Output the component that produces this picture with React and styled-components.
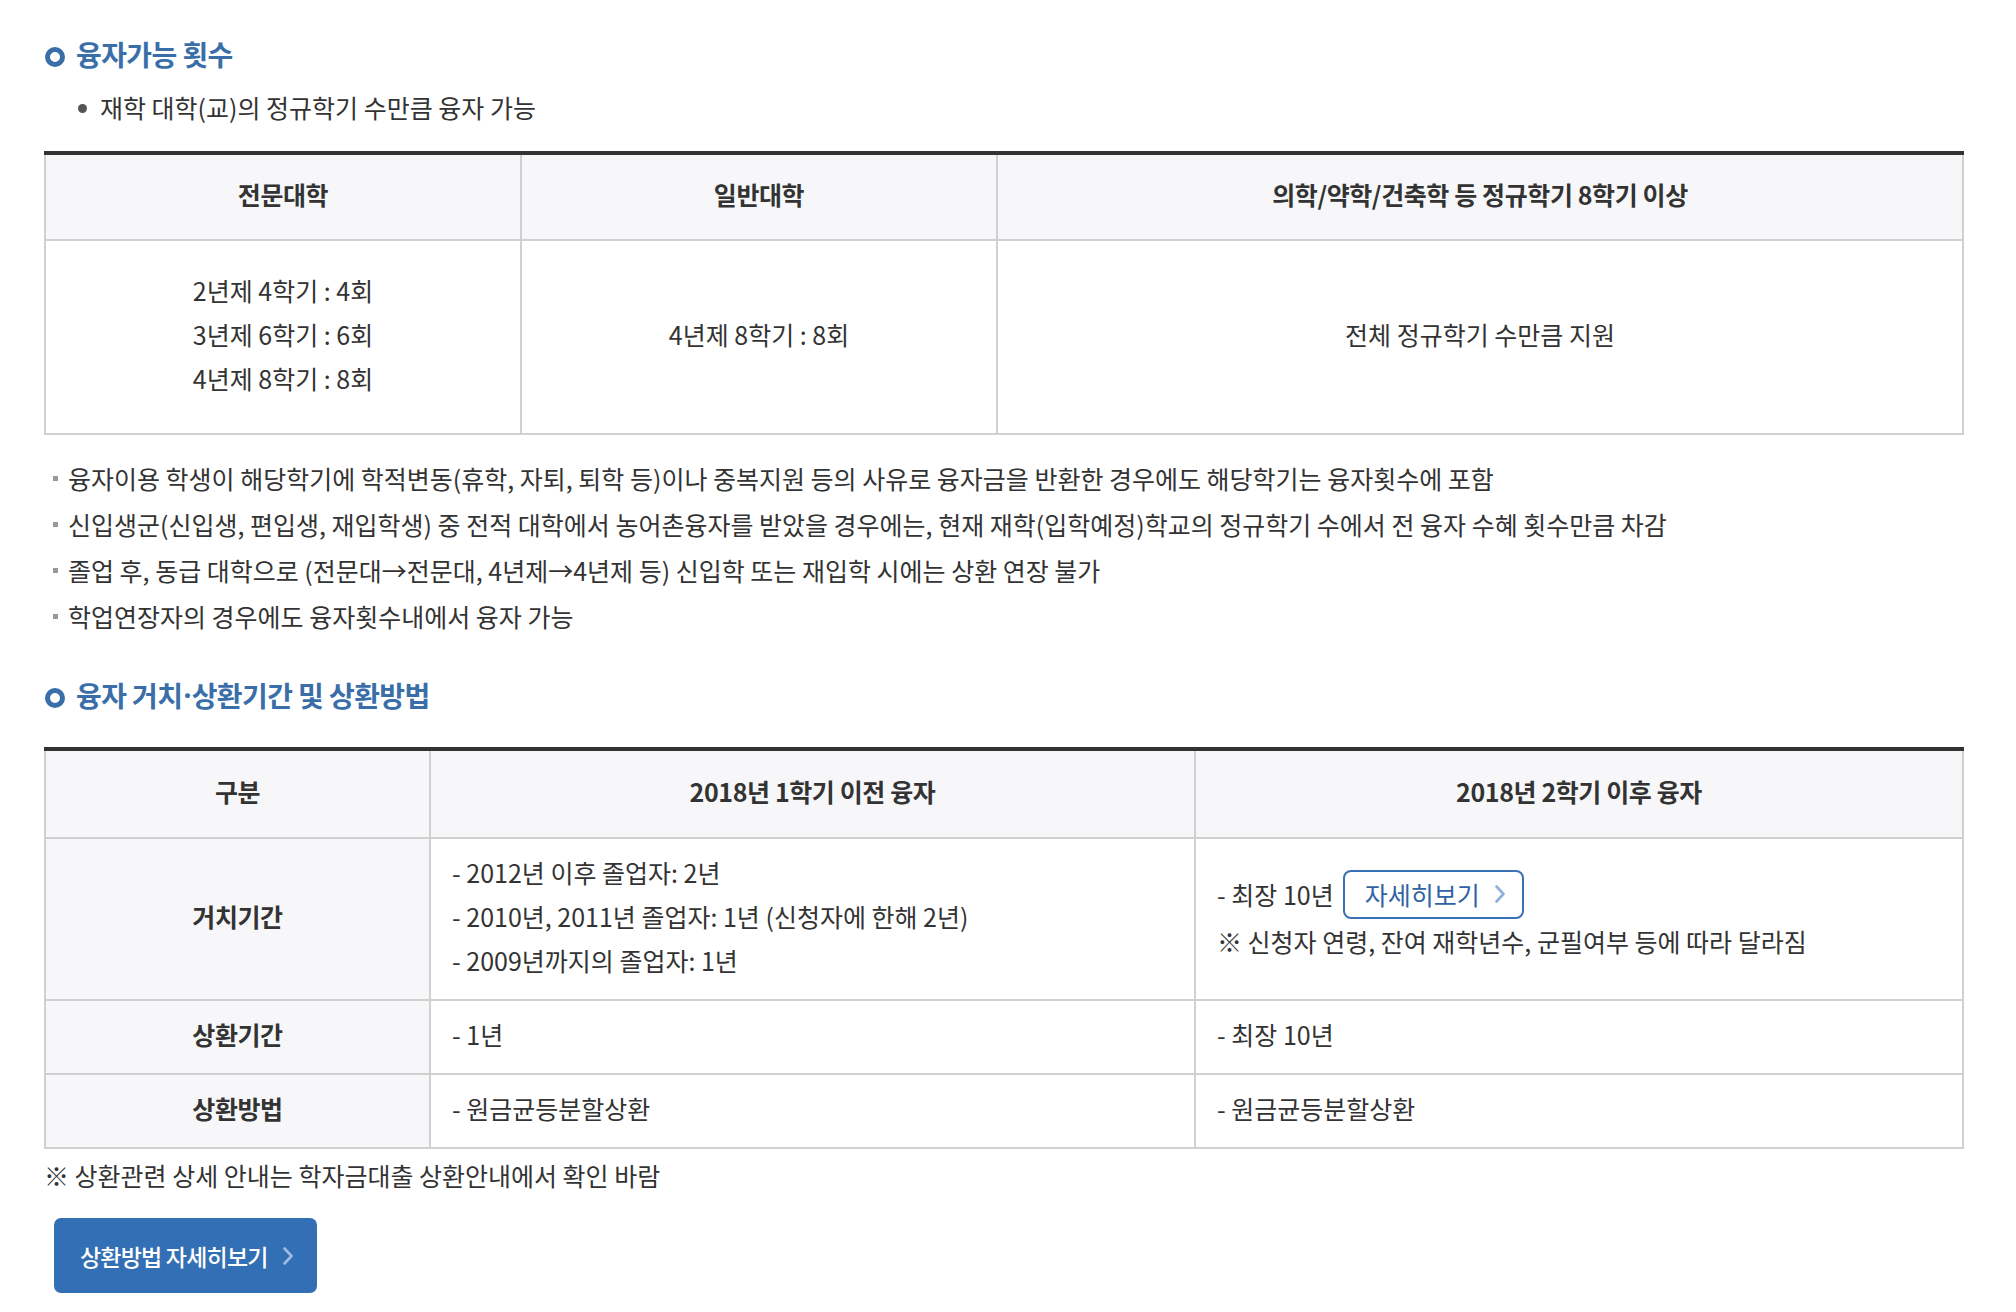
import React from 'react';
import styled, { createGlobalStyle } from 'styled-components';

const GlobalStyle = createGlobalStyle`
  html, body {
    margin: 0;
    padding: 0;
    background: #fff;
  }
  body {
    font-family: "Noto Sans CJK KR", "Noto Sans", sans-serif;
    color: #333;
  }
`;

const BLUE = '#3a6ea9';

const Page = styled.div`
  width: 1920px;
  padding: 34px 0 20px 44px;
`;

const Heading = styled.h3`
  display: flex;
  align-items: center;
  margin: ${(p) => p.$top || 0}px 0 0;
  font-size: 28px;
  line-height: 40px;
  font-weight: 700;
  letter-spacing: -0.6px;
  color: ${BLUE};

  &::before {
    content: '';
    box-sizing: border-box;
    width: 20px;
    height: 20px;
    margin: 6px 11px 0 1px;
    border: 5px solid ${BLUE};
    border-radius: 50%;
  }
`;

const Dot = styled.span`
  font-family: "Noto Sans", sans-serif;
  margin: 0 1px;
`;

const DotLine = styled.p`
  display: flex;
  align-items: center;
  margin: 13px 0 0;
  font-size: 25px;
  line-height: 40px;

  &::before {
    content: '';
    width: 9px;
    height: 9px;
    margin: 3px 13px 0 34px;
    border-radius: 50%;
    background: #555;
  }
`;

const Table = styled.table`
  width: 1920px;
  margin-top: ${(p) => p.$top || 0}px;
  border-collapse: collapse;
  table-layout: fixed;
  border-top: 4px solid #333;
  font-size: 25px;
  line-height: 44px;
  color: #333;
`;

const Th = styled.th`
  padding: ${(p) => (p.$pad || 20) - 3}px 20px ${(p) => (p.$pad || 20) + 3}px;
  border: 2px solid #d0d0d0;
  border-top: 0;
  background: #f7f7f9;
  font-weight: 700;
  letter-spacing: -0.4px;
  color: #333;
  text-align: center;
`;

const Td = styled.td`
  padding: ${(p) => (p.$pad || 14) - 3}px 21px ${(p) => (p.$pad || 14) + 3}px;
  border: 2px solid #d0d0d0;
  text-align: ${(p) => (p.$center ? 'center' : 'left')};
  vertical-align: middle;
`;

const Notes = styled.ul`
  list-style: none;
  margin: 20px 0 0;
  padding: 0;
  font-size: 25px;
  line-height: 46px;
  color: #333;
`;

const Note = styled.li`
  display: flex;
  align-items: center;

  &::before {
    content: '';
    flex: none;
    width: 5px;
    height: 5px;
    margin: 1px 10px 0 9px;
    background: #999;
  }
`;

const Remark = styled.p`
  margin: 6px 0 0;
  font-size: 25px;
  line-height: 40px;
`;

const ButtonRow = styled.div`
  display: flex;
  align-items: center;
`;

const OutlineButton = styled.a`
  display: inline-flex;
  align-items: center;
  box-sizing: border-box;
  height: 49px;
  margin-left: 9px;
  padding: 0 16px 0 20px;
  gap: 14px;
  border: 2px solid #3a70b5;
  border-radius: 8px;
  color: #2f63a3;
  font-size: 25px;
  text-decoration: none;
`;

const BigButton = styled.a`
  display: inline-flex;
  align-items: center;
  box-sizing: border-box;
  width: 263px;
  height: 75px;
  margin: 23px 0 0 10px;
  padding-left: 26px;
  gap: 14px;
  border-radius: 7px;
  background: #336fb4;
  color: #fff;
  font-size: 23px;
  font-weight: 500;
  letter-spacing: -0.8px;
  text-decoration: none;
`;

const Chevron = ({ color }) => (
  <svg width="12" height="20" viewBox="0 0 12 20">
    <polyline
      points="2.5,2.5 9.5,10 2.5,17.5"
      fill="none"
      stroke={color}
      strokeWidth="2.6"
      strokeLinecap="round"
      strokeLinejoin="round"
    />
  </svg>
);

const notes = [
  '융자이용 학생이 해당학기에 학적변동(휴학, 자퇴, 퇴학 등)이나 중복지원 등의 사유로 융자금을 반환한 경우에도 해당학기는 융자횟수에 포함',
  '신입생군(신입생, 편입생, 재입학생) 중 전적 대학에서 농어촌융자를 받았을 경우에는, 현재 재학(입학예정)학교의 정규학기 수에서 전 융자 수혜 횟수만큼 차감',
  '졸업 후, 동급 대학으로 (전문대→전문대, 4년제→4년제 등) 신입학 또는 재입학 시에는 상환 연장 불가',
  '학업연장자의 경우에도 융자횟수내에서 융자 가능',
];

const App = () => (
  <Page>
    <GlobalStyle />
    <Heading>융자가능 횟수</Heading>
    <DotLine>재학 대학(교)의 정규학기 수만큼 융자 가능</DotLine>

    <Table $top={24}>
      <colgroup>
        <col style={{ width: 476 }} />
        <col style={{ width: 476 }} />
        <col />
      </colgroup>
      <thead>
        <tr>
          <Th>전문대학</Th>
          <Th>일반대학</Th>
          <Th>의학/약학/건축학 등 정규학기 8학기 이상</Th>
        </tr>
      </thead>
      <tbody>
        <tr>
          <Td $center $pad={30}>
            2년제 4학기 : 4회
            <br />
            3년제 6학기 : 6회
            <br />
            4년제 8학기 : 8회
          </Td>
          <Td $center $pad={30}>4년제 8학기 : 8회</Td>
          <Td $center $pad={30}>전체 정규학기 수만큼 지원</Td>
        </tr>
      </tbody>
    </Table>

    <Notes>
      {notes.map((n) => (
        <Note key={n}>{n}</Note>
      ))}
    </Notes>

    <Heading $top={36}>
      융자 거치<Dot>·</Dot>상환기간 및 상환방법
    </Heading>

    <Table $top={32}>
      <colgroup>
        <col style={{ width: 385 }} />
        <col style={{ width: 765 }} />
        <col />
      </colgroup>
      <thead>
        <tr>
          <Th $pad={21}>구분</Th>
          <Th $pad={21}>2018년 1학기 이전 융자</Th>
          <Th $pad={21}>2018년 2학기 이후 융자</Th>
        </tr>
      </thead>
      <tbody>
        <tr>
          <Th as="td">거치기간</Th>
          <Td>
            - 2012년 이후 졸업자: 2년
            <br />
            - 2010년, 2011년 졸업자: 1년 (신청자에 한해 2년)
            <br />
            - 2009년까지의 졸업자: 1년
          </Td>
          <Td>
            <ButtonRow>
              - 최장 10년
              <OutlineButton href="#">
                자세히보기
                <Chevron color="#8fb0da" />
              </OutlineButton>
            </ButtonRow>
            ※ 신청자 연령, 잔여 재학년수, 군필여부 등에 따라 달라짐
          </Td>
        </tr>
        <tr>
          <Th as="td" $pad={14}>상환기간</Th>
          <Td>- 1년</Td>
          <Td>- 최장 10년</Td>
        </tr>
        <tr>
          <Th as="td" $pad={14}>상환방법</Th>
          <Td>- 원금균등분할상환</Td>
          <Td>- 원금균등분할상환</Td>
        </tr>
      </tbody>
    </Table>

    <Remark>※ 상환관련 상세 안내는 학자금대출 상환안내에서 확인 바람</Remark>

    <BigButton href="#">
      상환방법 자세히보기
      <Chevron color="#9dbbe2" />
    </BigButton>
  </Page>
);

export default App;
